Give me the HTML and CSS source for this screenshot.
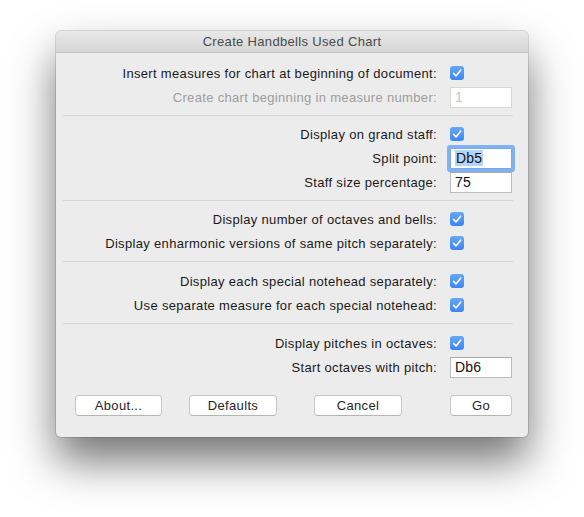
FILE: index.html
```html
<!DOCTYPE html>
<html>
<head>
<meta charset="utf-8">
<link rel="stylesheet" href="styles.css">
</head>
<body>
<div class="window">
  <div class="titlebar">Create Handbells Used Chart</div>
  <div class="content">
    <div class="row">
      <span class="label">Insert measures for chart at beginning of document:</span>
      <span class="ctl"><span class="check"><svg viewBox="0 0 14 14" width="14" height="14"><path d="M3.6 7.4 L6 9.9 L10.6 4.2" fill="none" stroke="#fff" stroke-width="1.6" stroke-linecap="round" stroke-linejoin="round"/></svg></span></span>
    </div>
    <div class="row">
      <span class="label disabled">Create chart beginning in measure number:</span>
      <span class="ctl"><span class="field field-disabled">1</span></span>
    </div>
    <div class="sep sep-first"></div>
    <div class="row">
      <span class="label">Display on grand staff:</span>
      <span class="ctl"><span class="check"><svg viewBox="0 0 14 14" width="14" height="14"><path d="M3.6 7.4 L6 9.9 L10.6 4.2" fill="none" stroke="#fff" stroke-width="1.6" stroke-linecap="round" stroke-linejoin="round"/></svg></span></span>
    </div>
    <div class="row">
      <span class="label">Split point:</span>
      <span class="ctl"><span class="field field-focus"><span class="sel">Db5</span></span></span>
    </div>
    <div class="row">
      <span class="label">Staff size percentage:</span>
      <span class="ctl"><span class="field">75</span></span>
    </div>
    <div class="sep sep-first"></div>
    <div class="row">
      <span class="label">Display number of octaves and bells:</span>
      <span class="ctl"><span class="check"><svg viewBox="0 0 14 14" width="14" height="14"><path d="M3.6 7.4 L6 9.9 L10.6 4.2" fill="none" stroke="#fff" stroke-width="1.6" stroke-linecap="round" stroke-linejoin="round"/></svg></span></span>
    </div>
    <div class="row">
      <span class="label">Display enharmonic versions of same pitch separately:</span>
      <span class="ctl"><span class="check"><svg viewBox="0 0 14 14" width="14" height="14"><path d="M3.6 7.4 L6 9.9 L10.6 4.2" fill="none" stroke="#fff" stroke-width="1.6" stroke-linecap="round" stroke-linejoin="round"/></svg></span></span>
    </div>
    <div class="sep"></div>
    <div class="row">
      <span class="label">Display each special notehead separately:</span>
      <span class="ctl"><span class="check"><svg viewBox="0 0 14 14" width="14" height="14"><path d="M3.6 7.4 L6 9.9 L10.6 4.2" fill="none" stroke="#fff" stroke-width="1.6" stroke-linecap="round" stroke-linejoin="round"/></svg></span></span>
    </div>
    <div class="row">
      <span class="label">Use separate measure for each special notehead:</span>
      <span class="ctl"><span class="check"><svg viewBox="0 0 14 14" width="14" height="14"><path d="M3.6 7.4 L6 9.9 L10.6 4.2" fill="none" stroke="#fff" stroke-width="1.6" stroke-linecap="round" stroke-linejoin="round"/></svg></span></span>
    </div>
    <div class="sep"></div>
    <div class="row">
      <span class="label">Display pitches in octaves:</span>
      <span class="ctl"><span class="check"><svg viewBox="0 0 14 14" width="14" height="14"><path d="M3.6 7.4 L6 9.9 L10.6 4.2" fill="none" stroke="#fff" stroke-width="1.6" stroke-linecap="round" stroke-linejoin="round"/></svg></span></span>
    </div>
    <div class="row">
      <span class="label">Start octaves with pitch:</span>
      <span class="ctl"><span class="field">Db6</span></span>
    </div>
    <div class="buttons">
      <span class="btn btn-about">About...</span>
      <span class="btn btn-defaults">Defaults</span>
      <span class="btn btn-cancel">Cancel</span>
      <span class="btn btn-go">Go</span>
    </div>
  </div>
</div>
</body>
</html>
```

FILE: styles.css
```css
html, body {
  margin: 0;
  padding: 0;
  background: #ffffff;
}
body {
  box-sizing: border-box;
  min-height: 517px;
  padding: 31px 0 80px 56px;
  font-family: "Liberation Sans", Arial, sans-serif;
  font-size: 13px;
  letter-spacing: 0.33px;
  color: #1a1a1a;
}
.window {
  width: 472px;
  height: 406px;
  box-sizing: border-box;
  background: #ececec;
  border-radius: 5px;
  box-shadow: 0 24px 44px rgba(0, 0, 0, 0.55), 0 0 0 1px rgba(0, 0, 0, 0.12);
  overflow: hidden;
}
.titlebar {
  height: 22px;
  box-sizing: border-box;
  background: linear-gradient(#e9e9e9, #d6d6d6);
  border-bottom: 1px solid #c4c4c4;
  text-align: center;
  line-height: 22px;
  color: #4a4a4a;
}
.content {
  padding-top: 8px;
}
.row {
  display: flex;
  justify-content: flex-end;
  align-items: center;
  height: 24px;
  padding-right: 16px;
}
.label {
  white-space: nowrap;
}
.label.disabled {
  color: #9d9d9d;
}
.ctl {
  width: 62px;
  margin-left: 13px;
  display: flex;
  align-items: center;
}
.check {
  width: 14px;
  height: 14px;
  border-radius: 3px;
  background: linear-gradient(#66a9f8, #3b86f5);
  display: block;
}
.check svg {
  display: block;
}
.field {
  display: block;
  box-sizing: border-box;
  width: 62px;
  height: 21px;
  background: #ffffff;
  border: 1px solid #bcbcbc;
  border-top-color: #a9a9a9;
  padding-left: 4px;
  line-height: 19px;
  font-size: 14px;
  letter-spacing: 0.2px;
  color: #111;
}
.field-disabled {
  border-color: #d6d6d6;
  color: #c4c4c4;
}
.field-focus {
  border-color: #7aa9e6;
  box-shadow: 0 0 0 3px #80b2f1;
  border-radius: 1px;
}
.sel {
  background: #b3d4fc;
  padding: 0 1px;
}
.sep {
  height: 1px;
  background: #d5d5d5;
  margin: 6px 15px 7px 7px;
}
.sep-first {
  margin-bottom: 6px;
}
.buttons {
  display: flex;
  padding-left: 19px;
  margin-top: 16px;
}
.btn {
  display: block;
  box-sizing: border-box;
  height: 21px;
  line-height: 19px;
  text-align: center;
  background: #ffffff;
  border: 1px solid #c8c8c8;
  border-bottom-color: #b4b4b4;
  border-radius: 4px;
  color: #1f1f1f;
}
.btn-about { width: 87px; }
.btn-defaults { width: 88px; margin-left: 27px; }
.btn-cancel { width: 88px; margin-left: 37px; }
.btn-go { width: 62px; margin-left: 48px; }
```
